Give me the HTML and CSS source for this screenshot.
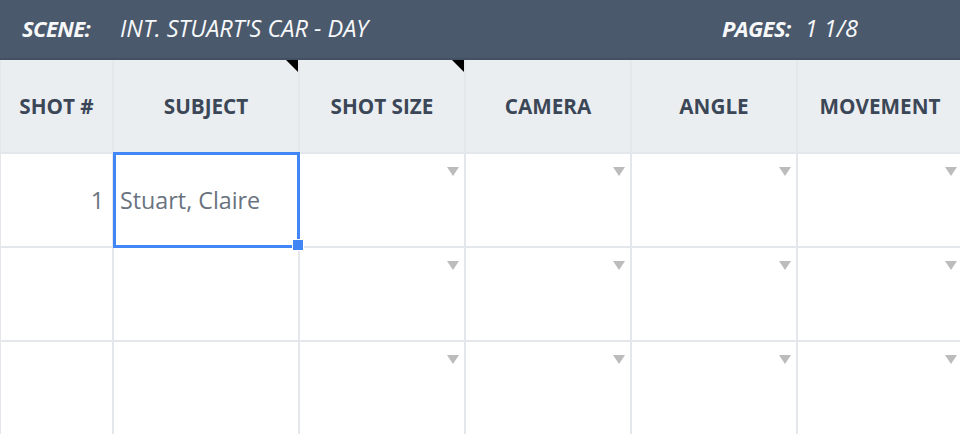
FILE: index.html
```
<!DOCTYPE html>
<html>
<head>
<meta charset="utf-8">
<link rel="stylesheet" href="styles.css">
</head>
<body>
<div class="bar">
  <div class="bar-left">
    <span class="bar-label">SCENE:</span>
    <span class="bar-value">INT. STUART'S CAR - DAY</span>
  </div>
  <div class="bar-right">
    <span class="bar-label">PAGES:</span>
    <span class="bar-value">1 1/8</span>
  </div>
</div>
<div class="sheet">
  <div class="grid">
    <div class="hcell">SHOT #</div>
    <div class="hcell flagged">SUBJECT</div>
    <div class="hcell flagged">SHOT SIZE</div>
    <div class="hcell">CAMERA</div>
    <div class="hcell">ANGLE</div>
    <div class="hcell">MOVEMENT</div>

    <div class="cell num">1</div>
    <div class="cell text">Stuart, Claire</div>
    <div class="cell drop"></div>
    <div class="cell drop"></div>
    <div class="cell drop"></div>
    <div class="cell drop"></div>

    <div class="cell num"></div>
    <div class="cell text"></div>
    <div class="cell drop"></div>
    <div class="cell drop"></div>
    <div class="cell drop"></div>
    <div class="cell drop"></div>

    <div class="cell num"></div>
    <div class="cell text"></div>
    <div class="cell drop"></div>
    <div class="cell drop"></div>
    <div class="cell drop"></div>
    <div class="cell drop"></div>
  </div>
  <div class="selection"></div>
  <div class="handle"></div>
</div>
</body>
</html>
```
FILE: styles.css
```
html, body {
  margin: 0;
  padding: 0;
  width: 960px;
  height: 434px;
  overflow: hidden;
  background: #ffffff;
  font-family: "Open Sans", "Liberation Sans", sans-serif;
}

.bar {
  height: 56px;
  padding-bottom: 2px;
  border-bottom: 2px solid #435062;
  background: #4b596c;
  color: #f7f8fa;
  display: flex;
  align-items: center;
  font-size: 22px;
  font-style: italic;
}

.bar-left {
  display: flex;
  align-items: baseline;
  padding-left: 22px;
  width: 700px;
}

.bar-left .bar-label {
  width: 98px;
}

.bar-right {
  display: flex;
  align-items: baseline;
  gap: 14px;
}

.bar-label {
  font-weight: 700;
  letter-spacing: -0.6px;
}

.bar-value {
  font-weight: 400;
  font-size: 23.5px;
}

.sheet {
  position: relative;
  width: 962px;
}

.grid {
  display: grid;
  grid-template-columns: 111px 184px 164px 164px 164px 164px;
  grid-template-rows: 92px 92px 92px 92px;
  column-gap: 2px;
  row-gap: 2px;
  padding-left: 1px;
  background: #e4e8ec;
}

.hcell {
  position: relative;
  background: #ebeef1;
  color: #3b4757;
  font-weight: 700;
  font-size: 20.7px;
  display: flex;
  align-items: center;
  justify-content: center;
}

.flagged::after {
  content: "";
  position: absolute;
  top: 0;
  right: 0;
  border-top: 12px solid #000000;
  border-left: 12px solid transparent;
}

.cell {
  position: relative;
  background: #ffffff;
  color: #6a737f;
  font-size: 23.3px;
  display: flex;
  align-items: center;
}

.num {
  justify-content: flex-end;
  padding-right: 8px;
}

.text {
  padding-left: 6px;
}

.drop::after {
  content: "";
  position: absolute;
  top: 13px;
  right: 5px;
  border-top: 9px solid #bcbcbc;
  border-left: 6px solid transparent;
  border-right: 6px solid transparent;
}

.selection {
  position: absolute;
  left: 113px;
  top: 92px;
  width: 187px;
  height: 96px;
  box-sizing: border-box;
  border: 3px solid #4285f4;
}

.handle {
  position: absolute;
  left: 292px;
  top: 179px;
  width: 12px;
  height: 12px;
  box-sizing: border-box;
  background: #4285f4;
  border: 1px solid #ffffff;
}
```
